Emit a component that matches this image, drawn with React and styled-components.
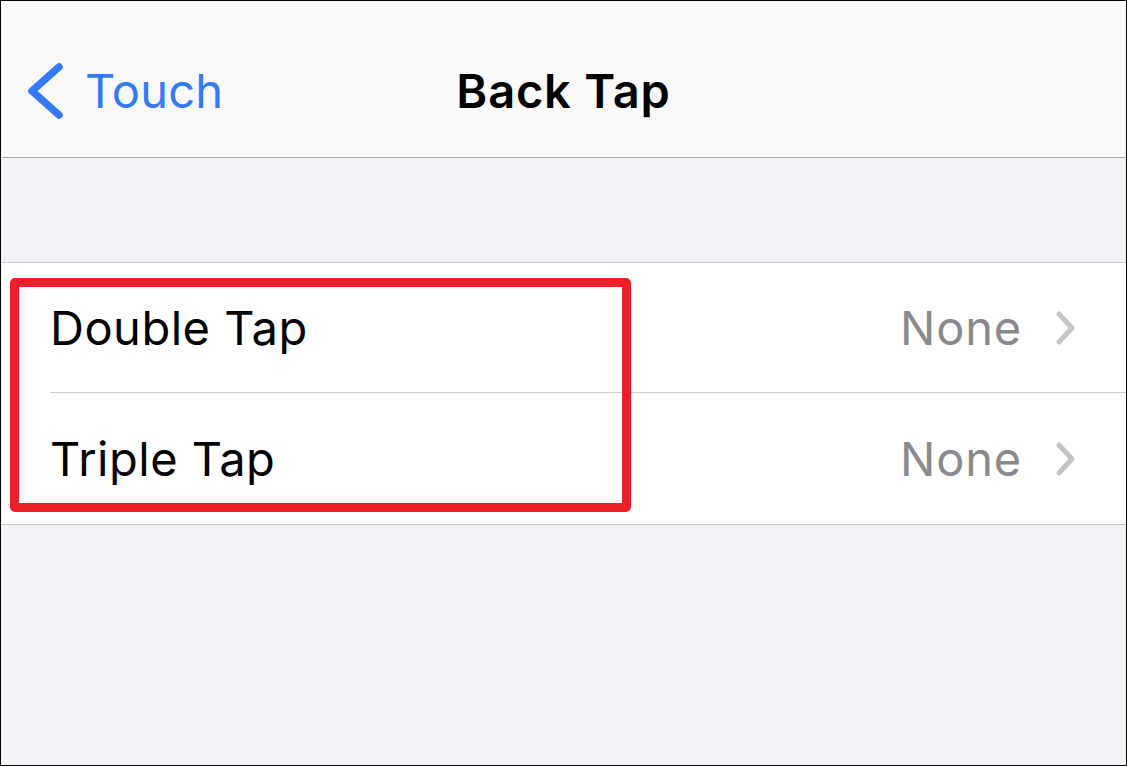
import React from 'react'
import styled, { createGlobalStyle } from 'styled-components'

const GlobalStyle = createGlobalStyle`
  html, body {
    margin: 0;
    padding: 0;
    background: #fff;
  }
  * {
    box-sizing: border-box;
  }
`

const Screen = styled.div`
  width: 1127px;
  height: 766px;
  border: 1px solid #000;
  background: #f2f2f7;
  font-family: Inter, 'Noto Sans', sans-serif;
  display: flex;
  flex-direction: column;
  overflow: hidden;
`

const NavBar = styled.header`
  height: 157px;
  background: #f9f9fa;
  border-bottom: 1px solid #ababab;
  display: grid;
  grid-template-columns: 1fr auto 1fr;
  align-items: center;
  padding-top: 23px;
`

const BackButton = styled.div`
  display: flex;
  align-items: center;
  gap: 19px;
  padding-left: 25px;
  color: #3479f6;
  font-size: 47px;
  letter-spacing: 0.2px;
`

const Title = styled.h1`
  margin: 0;
  font-size: 47px;
  font-weight: 600;
  color: #000;
  letter-spacing: 0.8px;
`

const Spacer = styled.div`
  height: 104px;
  flex-shrink: 0;
`

const List = styled.section`
  position: relative;
  background: #fff;
  border-top: 1px solid #c8c8cb;
  border-bottom: 1px solid #c8c8cb;
`

const Row = styled.div`
  height: ${p => p.$height}px;
  display: flex;
  align-items: center;
  margin-left: 49px;
  padding-right: 48px;
  border-bottom: ${p => (p.$divider ? '1px solid #cfcfd2' : 'none')};
`

const Label = styled.span`
  flex: 1;
  font-size: 47px;
  color: #000;
  letter-spacing: 0.5px;
`

const Value = styled.span`
  font-size: 47px;
  color: #8a8a8e;
  margin-right: 32px;
  letter-spacing: 0.8px;
`

const Highlight = styled.div`
  position: absolute;
  left: 9px;
  top: 15px;
  width: 621px;
  height: 234px;
  border: 9px solid #ee1f28;
  border-radius: 5px;
  pointer-events: none;
`

const BackChevron = () => (
  <svg width="40" height="60" viewBox="0 0 40 60">
    <polyline
      points="33,6 6,30 33,54"
      fill="none"
      stroke="#3479f6"
      strokeWidth="7.5"
      strokeLinecap="round"
      strokeLinejoin="round"
    />
  </svg>
)

const RowChevron = () => (
  <svg width="24" height="36" viewBox="0 0 24 36">
    <polyline
      points="5,4 18,18 5,32"
      fill="none"
      stroke="#c4c4c7"
      strokeWidth="5"
      strokeLinecap="round"
      strokeLinejoin="round"
    />
  </svg>
)

const rows = [
  { label: 'Double Tap', value: 'None', height: 130 },
  { label: 'Triple Tap', value: 'None', height: 131 }
]

const App = () => {
  return (
    <>
      <GlobalStyle />
      <Screen>
        <NavBar>
          <BackButton>
            <BackChevron />
            <span>Touch</span>
          </BackButton>
          <Title>Back Tap</Title>
          <div />
        </NavBar>
        <Spacer />
        <List>
          {rows.map((row, i) => (
            <Row key={row.label} $height={row.height} $divider={i < rows.length - 1}>
              <Label>{row.label}</Label>
              <Value>{row.value}</Value>
              <RowChevron />
            </Row>
          ))}
          <Highlight />
        </List>
      </Screen>
    </>
  )
}

export default App
